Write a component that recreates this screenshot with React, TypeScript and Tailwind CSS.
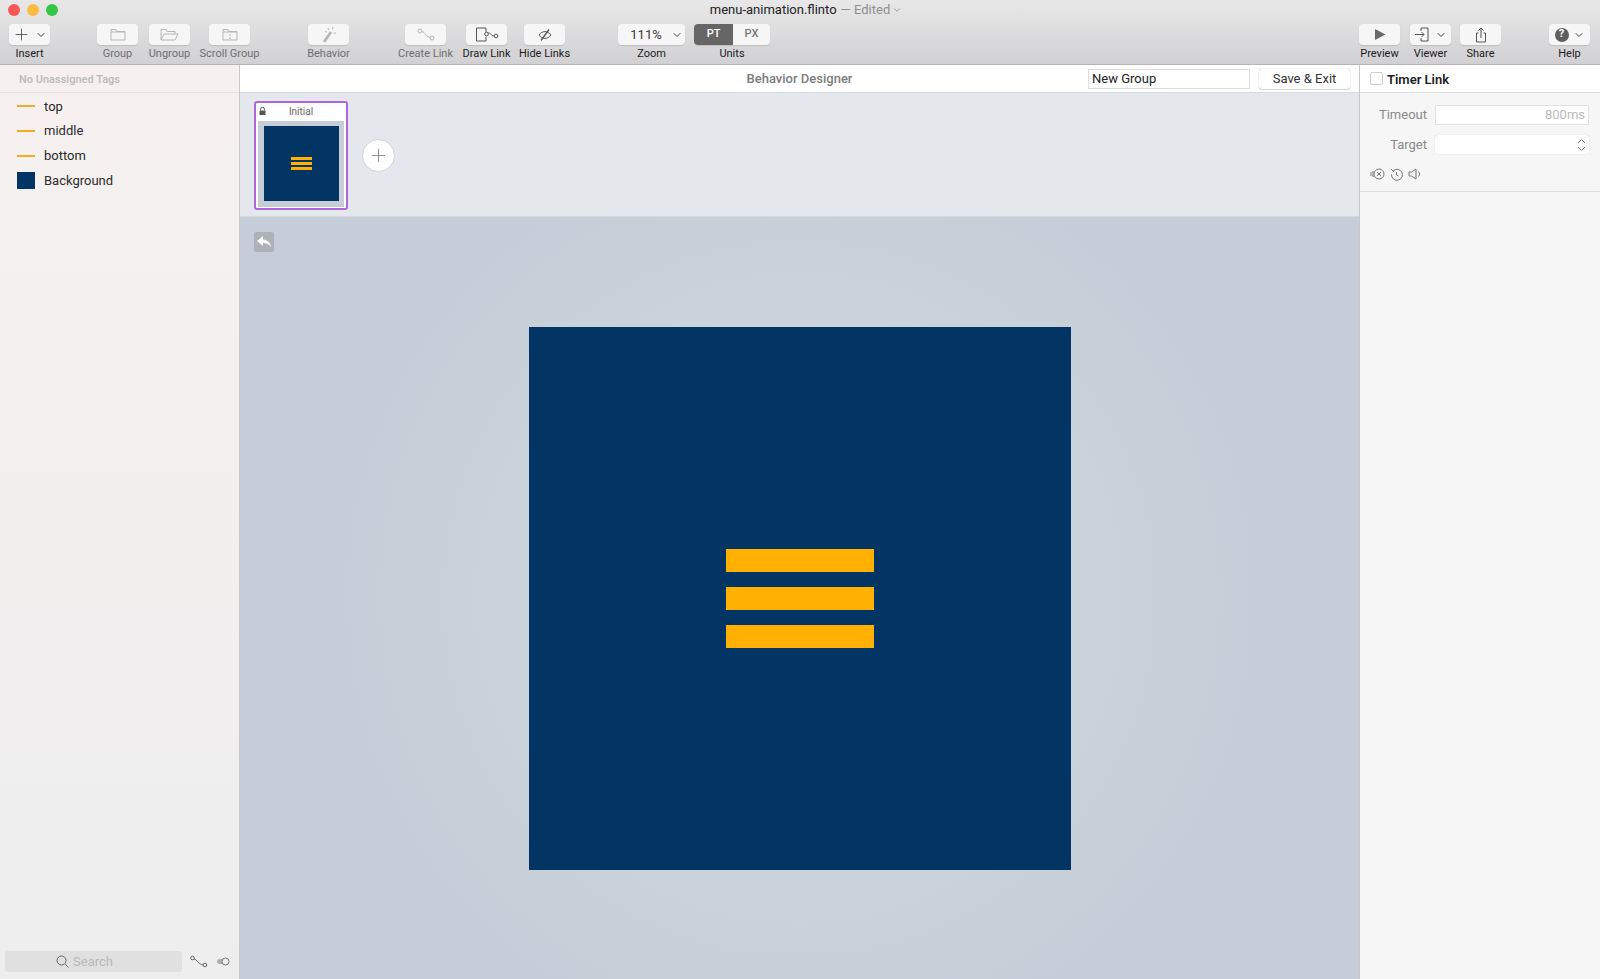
import type { ReactNode } from "react"
import { ChevronDown, Plus } from "lucide-react"

function Tool({
  label,
  children,
  ml,
  dim,
  width = "w-[41px]",
}: {
  label: string
  children: ReactNode
  ml: string
  dim?: boolean
  width?: string
}) {
  return (
    <div className={`flex flex-col items-center ${width} ${ml}`}>
      <div className="flex h-[21px] w-full items-center justify-center rounded-[4px] bg-[#f6f6f6] shadow-[0_1px_1px_rgba(0,0,0,0.12)]">
        {children}
      </div>
      <span className={`mt-[2px] whitespace-nowrap text-[11px] leading-[14px] ${dim ? "text-[#6f6f6f]" : "text-[#1c1c1c]"}`}>
        {label}
      </span>
    </div>
  )
}

function Stroke({ w, h, children, color = "#b5b5b5" }: { w: number; h: number; children: ReactNode; color?: string }) {
  return (
    <svg width={w} height={h} viewBox={`0 0 ${w} ${h}`} fill="none" stroke={color} strokeWidth="1">
      {children}
    </svg>
  )
}

function TagRow({ name }: { name: string }) {
  return (
    <div className="flex h-[24.7px] items-center">
      <div className="h-[2px] w-[18px] bg-[#f5ac1f]" />
      <span className="ml-[9px] text-[13px] text-[#2a2a2a]">{name}</span>
    </div>
  )
}

function MenuBars({ h, gap, w }: { h: string; gap: string; w: string }) {
  return (
    <div className={`flex flex-col ${gap} ${w}`}>
      <div className={`${h} bg-[#ffb000]`} />
      <div className={`${h} bg-[#ffb000]`} />
      <div className={`${h} bg-[#ffb000]`} />
    </div>
  )
}

export default function App() {
  return (
    <div className="flex h-[979px] w-[1600px] flex-col overflow-hidden bg-white font-['Roboto','Liberation_Sans',sans-serif]">
      {/* title bar + toolbar */}
      <div className="h-[65px] shrink-0 border-b border-[#b4b3b5] bg-gradient-to-b from-[#e9e8e9] to-[#d1d0d2]">
        <div className="grid h-[20px] grid-cols-[1fr_auto_1fr] items-center">
          <div className="ml-[8px] flex gap-[7px]">
            <div className="h-[12px] w-[12px] rounded-full bg-[#fc5753]" />
            <div className="h-[12px] w-[12px] rounded-full bg-[#fdbc40]" />
            <div className="h-[12px] w-[12px] rounded-full bg-[#33c748]" />
          </div>
          <div className="flex items-center pl-[12px] text-[13px] text-[#222]">
            menu-animation.flinto
            <span className="ml-[4px] text-[#8f8f8f]">— Edited</span>
            <ChevronDown size={10} className="ml-[2px] text-[#8f8f8f]" />
          </div>
          <div />
        </div>
        <div className="mt-[4px] flex">
          <Tool label="Insert" ml="ml-[9px]">
            <Plus size={19} strokeWidth={1} className="text-[#444]" />
            <ChevronDown size={12} strokeWidth={2} className="ml-[4px] text-[#444]" />
          </Tool>
          <Tool label="Group" ml="ml-[47px]" dim>
            <Stroke w={16} h={13}>
              <path d="M1 12V1.500h5l1 2h8V12z M1 4h14" />
            </Stroke>
          </Tool>
          <Tool label="Ungroup" ml="ml-[11px]" dim>
            <Stroke w={19} h={13}>
              <path d="M1 12V1.500h5l1 2h8V6 M1 12l3-6h14l-3 6z" />
            </Stroke>
          </Tool>
          <Tool label="Scroll Group" ml="ml-[19px]" dim>
            <Stroke w={16} h={13}>
              <path d="M1 12V1.500h5l1 2h8V12z M1 4h14" />
              <path d="M8 6L6.500 7.500h3zM8 11l-1.500-1.500h3z" fill="#b5b5b5" stroke="none" />
            </Stroke>
          </Tool>
          <Tool label="Behavior" ml="ml-[58px]" dim>
            <Stroke w={15} h={16}>
              <path d="M3 15L10 5" strokeWidth="2.800" />
              <path d="M7 1l.5 2M12 0l-.4 2.500M15 6l-2.500 .2M4 4l1.800 1.200" />
            </Stroke>
          </Tool>
          <Tool label="Create Link" ml="ml-[56px]" dim>
            <Stroke w={18} h={13}>
              <circle cx="3" cy="3" r="2" />
              <circle cx="15" cy="10" r="2" />
              <path d="M5 3.500c3 .5 3 5 8 6" />
            </Stroke>
          </Tool>
          <Tool label="Draw Link" ml="ml-[20px]">
            <Stroke w={24} h={15} color="#555">
              <path d="M11 1H1.500v13H11V9.500 M11 1v4" />
              <circle cx="11.500" cy="7" r="1.800" />
              <circle cx="21" cy="9" r="1.800" />
              <path d="M13 6.500c2-2 3 2.500 6 2.500" />
            </Stroke>
          </Tool>
          <Tool label="Hide Links" ml="ml-[17px]">
            <Stroke w={14} h={12} color="#555">
              <path d="M1 6c3-4.500 9-4.500 12 0-3 4.500-9 4.500-12 0z" />
              <path d="M3 11.500L11 .5" strokeWidth="1.300" />
            </Stroke>
          </Tool>
          <Tool label="Zoom" ml="ml-[53px]" width="w-[67px]">
            <span className="ml-[10px] text-[13px] text-[#3a3a3a]">111%</span>
            <ChevronDown size={12} strokeWidth={2} className="ml-[9px] text-[#444]" />
          </Tool>
          <div className="ml-[9px] flex w-[76px] flex-col items-center">
            <div className="flex h-[21px] w-full overflow-hidden rounded-[4px] bg-[#f6f6f6] text-[11px] font-medium shadow-[0_1px_1px_rgba(0,0,0,0.12)]">
              <div className="flex w-[39px] items-center justify-center bg-[#666] text-white">PT</div>
              <div className="flex flex-1 items-center justify-center text-[#777]">PX</div>
            </div>
            <span className="mt-[2px] text-[11px] leading-[14px] text-[#1c1c1c]">Units</span>
          </div>
          <Tool label="Preview" ml="ml-auto">
            <svg width="12" height="13" viewBox="0 0 12 13">
              <path d="M1 1l10.500 5.500L1 12z" fill="#6a6a6a" />
            </svg>
          </Tool>
          <Tool label="Viewer" ml="ml-[10px]">
            <Stroke w={19} h={15} color="#555">
              <path d="M7 4V1h7v13H7v-3 M1 7.500h9 M7.500 5l2.500 2.500L7.500 10" />
            </Stroke>
            <ChevronDown size={12} strokeWidth={2} className="ml-[2px] text-[#444]" />
          </Tool>
          <Tool label="Share" ml="ml-[9px]">
            <Stroke w={12} h={16} color="#555">
              <path d="M3.500 6H1.500v9h9V6H8.500 M6 11V1 M3.500 3.500L6 1l2.500 2.500" />
            </Stroke>
          </Tool>
          <Tool label="Help" ml="ml-[48px] mr-[10px]">
            <div className="flex h-[14px] w-[14px] items-center justify-center rounded-full bg-[#5f5f5f] text-[11px] font-bold text-white">?</div>
            <ChevronDown size={12} strokeWidth={2} className="ml-[4px] text-[#444]" />
          </Tool>
        </div>
      </div>

      <div className="flex min-h-0 flex-1">
        {/* tags sidebar */}
        <div className="flex w-[240px] shrink-0 flex-col border-r border-[#c9c9c9] bg-gradient-to-b from-[#f6f1f0] to-[#eeeeee]">
          <div className="flex h-[28px] shrink-0 items-center border-b border-[#e6e2e1] pl-[19px] pt-[3px] text-[11px] font-semibold text-[#bdbdbd]">
            No Unassigned Tags
          </div>
          <div className="px-[17px] pt-[1px]">
            <TagRow name="top" />
            <TagRow name="middle" />
            <TagRow name="bottom" />
            <div className="flex h-[24.7px] items-center">
              <div className="h-[17px] w-[18px] bg-[#023564]" />
              <span className="ml-[9px] text-[13px] text-[#2a2a2a]">Background</span>
            </div>
          </div>
          <div className="mb-[7px] ml-[5px] mt-auto flex items-center">
            <div className="flex h-[21px] w-[177px] items-center justify-center rounded-[3px] bg-[#e0e0e0] pr-[18px] text-[13px] text-[#b8b8b8]">
              <svg width="13" height="13" viewBox="0 0 13 13" fill="none" stroke="#666" strokeWidth="1">
                <circle cx="5.500" cy="5.500" r="4.500" />
                <path d="M9 9l3.500 3.500" />
              </svg>
              <span className="ml-[4px]">Search</span>
            </div>
            <div className="ml-[8px]">
              <Stroke w={18} h={13} color="#666">
                <circle cx="2.500" cy="3" r="1.800" />
                <circle cx="15" cy="10" r="1.800" />
                <path d="M4 4c3 .5 4 5 9 6" />
              </Stroke>
            </div>
            <svg className="ml-[9px]" width="13" height="9" viewBox="0 0 13 9">
              <rect x="0" y="2" width="8" height="5" rx="2.500" fill="#b0b0b0" />
              <circle cx="8.500" cy="4.500" r="3.500" fill="#eee" stroke="#777" />
            </svg>
          </div>
        </div>

        {/* behavior designer */}
        <div className="flex min-w-0 flex-1 flex-col">
          <div className="grid h-[28px] shrink-0 grid-cols-[1fr_auto_1fr] items-center border-b border-[#d8dade] bg-white">
            <div />
            <span className="pt-[1px] text-[13px] font-medium text-[#7d7d7d]">Behavior Designer</span>
            <div className="flex items-center justify-end">
              <div className="flex h-[20px] w-[162px] items-center border border-[#dddddd] pl-[3px] pt-[1px] text-[13px] text-[#222]">
                New Group
              </div>
              <div className="ml-[9px] mr-[9px] flex h-[20px] w-[91px] items-center justify-center rounded-[3px] bg-white text-[13px] text-[#333] shadow-[0_0_1px_rgba(0,0,0,0.4),0_1px_1px_rgba(0,0,0,0.15)]">
                Save &amp; Exit
              </div>
            </div>
          </div>
          <div className="flex h-[124px] shrink-0 border-b border-[#d5d9de] bg-[#e4e8ed] pl-[14px] pt-[8px]">
            <div className="flex h-[109px] w-[94px] flex-col rounded-[3px] border-2 border-[#ae66d8] bg-white">
              <div className="relative flex h-[18px] shrink-0 items-center justify-center pb-[2px] text-[10px] text-[#666]">
                <svg className="absolute left-[3px] top-[4px]" width="7" height="8" viewBox="0 0 7 8">
                  <path d="M1.500 3.500V2.300a2 2 0 014 0v1.200" fill="none" stroke="#555" />
                  <rect x="0.500" y="3.500" width="6" height="4.500" rx="0.500" fill="#555" />
                </svg>
                Initial
              </div>
              <div className="mx-[2px] flex h-[86px] items-start justify-center bg-[#c6cdd6] pt-[5px]">
                <div className="flex h-[75px] w-[75px] items-center justify-center bg-[#023564]">
                  <MenuBars h="h-[3px]" gap="gap-[2px]" w="w-[21px]" />
                </div>
              </div>
            </div>
            <div className="ml-[14px] mt-[38px] flex h-[33px] w-[33px] items-center justify-center rounded-full border border-[#cfd3d8] bg-white">
              <Plus size={21} strokeWidth={0.8} className="text-[#666]" />
            </div>
          </div>
          <div className="relative flex min-h-0 flex-1 items-center justify-center bg-[radial-gradient(circle_at_center,#d2d8e0_0%,#c5ced8_70%)]">
            <div className="absolute left-[14px] top-[15px] flex h-[20px] w-[20px] items-center justify-center rounded-[2px] bg-[#aeb2b8]">
              <svg width="15" height="12" viewBox="0 0 15 12">
                <path d="M6 0L0 5l6 5V7c3.500 0 6 1 8 4-.5-4.500-3.500-7-8-7.500z" fill="#fff" />
              </svg>
            </div>
            <div className="flex h-[543px] w-[542px] items-center justify-center bg-[#023564]">
              <MenuBars h="h-[23px]" gap="gap-[15px]" w="w-[148px]" />
            </div>
          </div>
        </div>

        {/* timer link panel */}
        <div className="flex w-[241px] shrink-0 flex-col border-l border-[#c8c8c8] bg-white">
          <div className="flex h-[28px] shrink-0 items-center border-b border-[#dedede] pl-[10px]">
            <div className="h-[13px] w-[13px] rounded-[2px] border border-[#cfcfcf] bg-white" />
            <span className="ml-[4px] pt-[2px] text-[13px] font-semibold text-[#1d1d1d]">Timer Link</span>
          </div>
          <div className="flex h-[99px] shrink-0 flex-col border-b border-[#dedede] bg-[#f6f6f6] pr-[11px] pt-[12px]">
            <div className="flex items-center">
              <span className="w-[67px] text-right text-[13px] text-[#8a8a8a]">Timeout</span>
              <div className="ml-[8px] flex h-[20px] flex-1 items-center justify-end border border-[#e2e2e2] bg-white pr-[3px] text-[13px] text-[#bbbbbb]">
                800ms
              </div>
            </div>
            <div className="mt-[10px] flex items-center">
              <span className="w-[67px] text-right text-[13px] text-[#8a8a8a]">Target</span>
              <div className="ml-[8px] flex h-[19px] flex-1 items-center justify-end rounded-[3px] bg-white pr-[3px] shadow-[0_0_1px_rgba(0,0,0,0.25)]">
                <Stroke w={9} h={14} color="#777">
                  <path d="M1 5l3.500-3.500L8 5 M1 9l3.500 3.500L8 9" />
                </Stroke>
              </div>
            </div>
            <div className="ml-[10px] mt-[13px] flex items-center gap-[5px]">
              <Stroke w={15} h={12} color="#777">
                <path d="M1 4v4M3 3v6" />
                <circle cx="9" cy="6" r="5" />
                <path d="M7 4l4 4M11 4l-4 4" />
              </Stroke>
              <Stroke w={13} h={13} color="#777">
                <path d="M3 3a5.500 5.500 0 11-1.500 3.500 M1 1l3 3 M6.500 4v3l2 1" />
              </Stroke>
              <Stroke w={13} h={12} color="#777">
                <path d="M1 4v4h2.500L8 11V1L3.500 4z M10.500 3.500c1.300 1.500 1.300 3.500 0 5" />
              </Stroke>
            </div>
          </div>
          <div className="flex-1 bg-[#f6f6f6]" />
        </div>
      </div>
    </div>
  )
}
